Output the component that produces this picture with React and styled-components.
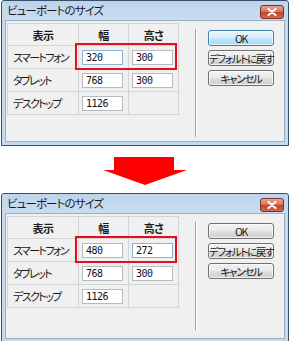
import React from "react";
import styled, { createGlobalStyle } from "styled-components";

const Global = createGlobalStyle`
  html, body { margin: 0; padding: 0; background: #ffffff; }
  body { font-family: "Noto Sans CJK JP", "Noto Sans", sans-serif; }
`;

const Page = styled.div`
  width: 290px;
  height: 341px;
  overflow: hidden;
  display: flex;
  flex-direction: column;
  align-items: flex-start;
`;

const Dialog = styled.div`
  margin-left: 1px;
  width: 288px;
  height: ${(p) => p.$h}px;
  box-sizing: border-box;
  border: 1px solid #34506a;
  border-radius: 3px 3px 0 0;
  background: #c6daee;
  padding: 0 3px 3px;
  display: flex;
  flex-direction: column;
  flex-shrink: 0;
`;

const TitleBar = styled.div`
  height: 19px;
  display: flex;
  align-items: center;
  justify-content: space-between;
  padding-left: 2px;
  background: linear-gradient(#bed4ec, #c9dcf0);
`;

const Title = styled.span`
  font-size: 11.5px;
  font-feature-settings: "palt";
  color: #1a1a1a;
  letter-spacing: -0.9px;
  line-height: 1;
`;

const Close = styled.div`
  width: 24px;
  height: 14px;
  margin-right: 1px;
  margin-top: 2px;
  box-sizing: border-box;
  border: 1px solid #7a3028;
  border-radius: 3px;
  background: linear-gradient(#e8a595 0%, #d8735f 45%, #c7442b 55%, #d16a4f 100%);
  display: flex;
  align-items: center;
  justify-content: center;
`;

const Content = styled.div`
  flex: 1;
  border: 1px solid #9aaec2;
  background: #f0f0f0;
  display: flex;
  align-items: flex-start;
  padding: 2px 0 0 1px;
  min-height: 0;
`;

const Table = styled.div`
  position: relative;
  display: grid;
  grid-template-columns: 71px 50px 50px;
  grid-template-rows: 22px 23px 23px 23px;
  border-left: 1px solid #d4d4d4;
  border-top: 1px solid #d4d4d4;
`;

const Cell = styled.div`
  border-right: 1px solid #d4d4d4;
  border-bottom: 1px solid #d4d4d4;
  display: flex;
  align-items: center;
  justify-content: ${(p) => (p.$head ? "center" : "flex-start")};
  padding-left: ${(p) => (p.$head ? 0 : p.$input ? 3 : 5)}px;
  font-size: 11px;
  font-weight: ${(p) => (p.$head ? 700 : 400)};
  font-feature-settings: "palt";
  letter-spacing: ${(p) => (p.$head ? -0.5 : -1.6)}px;
  color: #1a1a1a;
  white-space: nowrap;
  overflow: visible;
`;

const Input = styled.div`
  width: 41px;
  height: 15px;
  box-sizing: border-box;
  border: 1px solid ${(p) => (p.$focus ? "#8db2d6" : "#b5b9c0")};
  background: #ffffff;
  font-family: "DejaVu Sans Mono", monospace;
  font-size: 10px;
  line-height: 13px;
  padding-left: 3px;
  letter-spacing: -0.5px;
  color: #111;
`;

const Highlight = styled.div`
  position: absolute;
  left: 67px;
  top: 19px;
  width: 102px;
  height: 27px;
  box-sizing: border-box;
  border: 2px solid #e01020;
  pointer-events: none;
`;

const Separator = styled.div`
  width: 1px;
  height: 108px;
  margin: 6px 0 0 16px;
  background: #a0a0a0;
  border-right: 1px solid #ffffff;
`;

const Buttons = styled.div`
  display: flex;
  flex-direction: column;
  gap: 4px;
  margin: 7px 0 0 11px;
`;

const Button = styled.div`
  width: 66px;
  height: 16px;
  box-sizing: border-box;
  border: 1px solid ${(p) => (p.$default ? "#3c7fb1" : "#707070")};
  border-radius: 3px;
  background: ${(p) =>
    p.$default
      ? "linear-gradient(#eaf6fd 0%, #d9f0fc 45%, #bee6fd 55%, #a7d9f5 100%)"
      : "linear-gradient(#f2f2f2 0%, #ebebeb 45%, #dddddd 55%, #cfcfcf 100%)"};
  box-shadow: inset 0 0 0 1px rgba(255, 255, 255, 0.7);
  display: flex;
  align-items: center;
  justify-content: center;
  font-size: 10.5px;
  font-feature-settings: "palt";
  letter-spacing: -1.3px;
  color: #1a1a1a;
  white-space: nowrap;
`;

const ArrowRow = styled.div`
  height: 47px;
  width: 290px;
  display: flex;
  justify-content: center;
  padding-top: 11px;
  box-sizing: border-box;
  flex-shrink: 0;
`;

function CloseIcon() {
  return (
    <svg width="10" height="8" viewBox="0 0 10 8">
      <path d="M1.5 1 L8.5 7 M8.5 1 L1.5 7" stroke="#ffffff" strokeWidth="2" strokeLinecap="round" />
    </svg>
  );
}

function SizeDialog({ w, h, height, okFocus, focusW, focusH }) {
  return (
    <Dialog $h={height}>
      <TitleBar>
        <Title>ビューポートのサイズ</Title>
        <Close>
          <CloseIcon />
        </Close>
      </TitleBar>
      <Content>
        <Table>
          <Cell $head>表示</Cell>
          <Cell $head>幅</Cell>
          <Cell $head>高さ</Cell>
          <Cell>スマートフォン</Cell>
          <Cell $input>
            <Input $focus={focusW}>{w}</Input>
          </Cell>
          <Cell $input>
            <Input $focus={focusH}>{h}</Input>
          </Cell>
          <Cell>タブレット</Cell>
          <Cell $input>
            <Input>768</Input>
          </Cell>
          <Cell $input>
            <Input>300</Input>
          </Cell>
          <Cell>デスクトップ</Cell>
          <Cell $input>
            <Input>1126</Input>
          </Cell>
          <Cell />
          <Highlight />
        </Table>
        <Separator />
        <Buttons>
          <Button $default={okFocus}>OK</Button>
          <Button>デフォルトに戻す</Button>
          <Button>キャンセル</Button>
        </Buttons>
      </Content>
    </Dialog>
  );
}

export default function App() {
  return (
    <>
      <Global />
      <Page>
        <SizeDialog w="320" h="300" height={146} okFocus focusW />
        <ArrowRow>
          <svg width="86" height="29" viewBox="0 0 86 29">
            <polygon points="12,0 72,0 72,13 85,13 43,28 1,13 12,13" fill="#ff0000" />
          </svg>
        </ArrowRow>
        <SizeDialog w="480" h="272" height={150} focusH />
      </Page>
    </>
  );
}
